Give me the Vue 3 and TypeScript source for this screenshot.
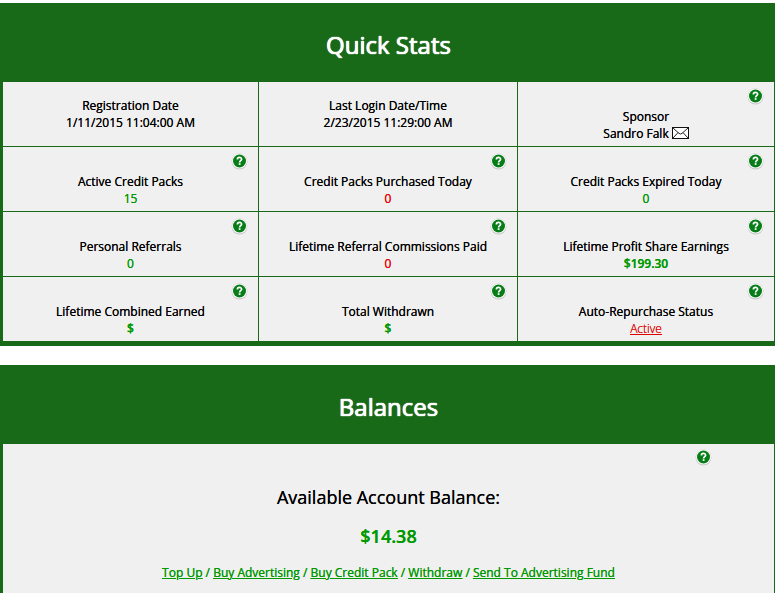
<script setup lang="ts">
import { h, type FunctionalComponent } from 'vue'

interface Stat {
  label: string
  value: string
  tone?: 'gain' | 'none'
  money?: boolean
  help?: boolean
  mail?: boolean
  href?: string
}

const stats: Stat[] = [
  { label: 'Registration Date', value: '1/11/2015 11:04:00 AM' },
  { label: 'Last Login Date/Time', value: '2/23/2015 11:29:00 AM' },
  { label: 'Sponsor', value: 'Sandro Falk', help: true, mail: true },
  { label: 'Active Credit Packs', value: '15', tone: 'gain', help: true },
  { label: 'Credit Packs Purchased Today', value: '0', tone: 'none', help: true },
  { label: 'Credit Packs Expired Today', value: '0', tone: 'gain', help: true },
  { label: 'Personal Referrals', value: '0', tone: 'gain', help: true },
  { label: 'Lifetime Referral Commissions Paid', value: '0', tone: 'none', help: true },
  { label: 'Lifetime Profit Share Earnings', value: '$199.30', tone: 'gain', money: true, help: true },
  { label: 'Lifetime Combined Earned', value: '$', tone: 'gain', money: true, help: true },
  { label: 'Total Withdrawn', value: '$', tone: 'gain', money: true, help: true },
  { label: 'Auto-Repurchase Status', value: 'Active', help: true, href: '#auto-repurchase' },
]

const actions: { text: string; href: string }[] = [
  { text: 'Top Up', href: '#top-up' },
  { text: 'Buy Advertising', href: '#advertising' },
  { text: 'Buy Credit Pack', href: '#credit-pack' },
  { text: 'Withdraw', href: '#withdraw' },
  { text: 'Send To Advertising Fund', href: '#fund' },
]

const HelpIcon: FunctionalComponent = () =>
  h('svg', { width: 18, height: 18, viewBox: '-0.5 0 18 18', 'aria-hidden': 'true' }, [
    h('circle', { cx: 9, cy: 9.8, r: 7.8, fill: '#c4c4c4' }),
    h('circle', { cx: 9, cy: 9, r: 7.8, fill: '#d8d8d8' }),
    h('circle', { cx: 9, cy: 9, r: 7.3, fill: '#fff' }),
    h('circle', { cx: 9, cy: 9, r: 6.5, fill: '#077d17' }),
    h('path', {
      d: 'M6.9 7.4C6.9 4.7 11.2 4.8 11.1 7.2C11 8.6 9.1 8.7 9.1 10.4',
      fill: 'none',
      stroke: '#fff',
      'stroke-width': 1.7,
    }),
    h('rect', { x: 8.2, y: 11.2, width: 1.8, height: 1.7, fill: '#fff' }),
  ])
</script>

<template>
  <main class="page">
    <section class="panel">
      <h2 class="title">Quick Stats</h2>
      <dl class="stats">
        <div v-for="stat in stats" :key="stat.label" class="stat">
          <button v-if="stat.help" type="button" class="help" :aria-label="'Help: ' + stat.label">
            <HelpIcon />
          </button>
          <dt>{{ stat.label }}</dt>
          <dd :class="[stat.tone, { money: stat.money }]">
            <a v-if="stat.href" class="status" :href="stat.href">{{ stat.value }}</a>
            <template v-else>{{ stat.value }}</template>
            <a v-if="stat.mail" class="mail" href="#message" aria-label="Message sponsor">
              <svg width="17" height="12" viewBox="0 0 17 12" aria-hidden="true">
                <rect x="0.5" y="0.5" width="16" height="11" fill="#fff" stroke="#111" />
                <path d="M1 1L7 6.4Q8.5 7.6 10 6.4L16 1M1 11L6 5.6M16 11L11 5.6" fill="none" stroke="#222" />
              </svg>
            </a>
          </dd>
        </div>
      </dl>
    </section>

    <section class="panel">
      <h2 class="title">Balances</h2>
      <div class="balance">
        <button type="button" class="help" aria-label="Help: Balances"><HelpIcon /></button>
        <h3 class="caption">Available Account Balance:</h3>
        <p class="amount">$14.38</p>
        <nav class="actions">
          <template v-for="(action, i) in actions" :key="action.href">
            <template v-if="i"> / </template><a :href="action.href">{{ action.text }}</a>
          </template>
        </nav>
      </div>
    </section>
  </main>
</template>

<style>
body {
  margin: 0;
  background: #fff;
}
</style>

<style scoped>
.page {
  display: flex;
  flex-direction: column;
  gap: 19px;
  padding-top: 3px;
  font-family: 'Open Sans', sans-serif;
  font-size: 12px;
  font-weight: 500;
  line-height: 17px;
  color: #000;
  text-align: center;
  text-shadow: 0 0 0 currentColor;
}
.panel {
  background: #186a18;
  padding: 0 1px 5px 3px;
}
.title {
  margin: 0;
  padding: 26px 0 21px;
  font-size: 24px;
  font-weight: 500;
  line-height: 32px;
  color: #fff;
  text-shadow: 0 0 1px #fff, 0 0 1px #fff, 0 0 0 #fff;
}
.stats {
  display: grid;
  grid-template-columns: 255fr 258fr 256fr;
  grid-auto-rows: minmax(64px, auto);
  gap: 1px;
  margin: 0;
}
.stat {
  display: flex;
  flex-direction: column;
  justify-content: center;
  background: #f0f0f0;
}
.help {
  align-self: flex-end;
  width: 18px;
  height: 18px;
  margin: 1px 10px 3px 0;
  padding: 0;
  border: 0;
  background: none;
  cursor: pointer;
}
.help svg {
  display: block;
}
dd {
  margin: 0;
}
.gain {
  color: #090;
  text-shadow: 0 0 0 #090;
}
.none {
  color: #f00000;
  text-shadow: 0 0 0 #f00000;
}
.money {
  font-weight: 600;
}
.status {
  color: #e00000;
  font-weight: 300;
  text-shadow: 0 0 0 #e00000;
}
.mail {
  margin-left: 3px;
}
.mail svg {
  vertical-align: -1px;
}
.balance {
  display: flex;
  flex-direction: column;
  padding: 4px 0 20px;
  background: #f0f0f0;
}
.balance .help {
  margin: 0 8% 19px 0;
}
.caption {
  margin: 0 0 15px;
  font-size: 18px;
  font-weight: 500;
  line-height: 24px;
}
.amount {
  margin: 0 0 16px;
  font-size: 18px;
  font-weight: 600;
  line-height: 24px;
  color: #090;
  text-shadow: 0 0 0 #090;
}
.actions,
.actions a {
  color: #090;
  text-shadow: 0 0 0 #090;
}
</style>
